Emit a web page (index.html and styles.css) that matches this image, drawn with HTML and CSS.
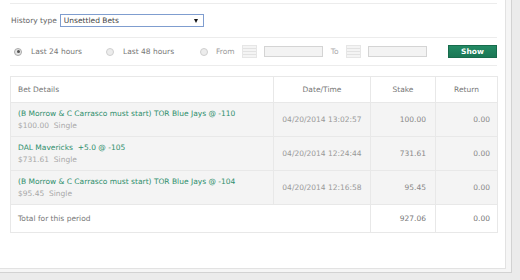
FILE: index.html
```html
<!DOCTYPE html>
<html lang="en">

<head>
    <meta charset="UTF-8">
    <title>Bet History</title>
    <link rel="stylesheet" href="styles.css">
</head>

<body>
    <div class="frame">
        <div class="panel">
            <div class="filters">
                <!-- History type -->
                <div class="filter-row history">
                    <label for="history-type">History type</label>
                    <span class="select-wrap">
                        <select id="history-type">
                            <option>Unsettled Bets</option>
                            <option>Settled Bets</option>
                        </select>
                    </span>
                </div>

                <!-- Period -->
                <div class="filter-row period">
                    <span class="radio checked"></span><span class="radio-label first">Last 24 hours</span>
                    <span class="radio"></span><span class="radio-label">Last 48 hours</span>
                    <span class="radio"></span><span class="radio-label short">From</span>
                    <span class="cal"></span><span class="date-input"></span>
                    <span class="radio-label to">To</span>
                    <span class="cal"></span><span class="date-input"></span>
                    <button class="show-btn">Show</button>
                </div>
            </div>

            <table class="bets">
                <thead>
                    <tr>
                        <th class="col-details">Bet Details</th>
                        <th class="col-date">Date/Time</th>
                        <th class="col-stake">Stake</th>
                        <th class="col-return">Return</th>
                    </tr>
                </thead>
                <tbody>
                    <tr class="bet">
                        <td>
                            <a href="#" class="selection">(B Morrow &amp; C Carrasco must start) TOR Blue Jays @ -110</a>
                            <div class="sub">$100.00&nbsp; Single</div>
                        </td>
                        <td class="date">04/20/2014 13:02:57</td>
                        <td class="num">100.00</td>
                        <td class="num">0.00</td>
                    </tr>
                    <tr class="bet">
                        <td>
                            <a href="#" class="selection">DAL Mavericks&nbsp; +5.0 @ -105</a>
                            <div class="sub">$731.61&nbsp; Single</div>
                        </td>
                        <td class="date">04/20/2014 12:24:44</td>
                        <td class="num">731.61</td>
                        <td class="num">0.00</td>
                    </tr>
                    <tr class="bet">
                        <td>
                            <a href="#" class="selection">(B Morrow &amp; C Carrasco must start) TOR Blue Jays @ -104</a>
                            <div class="sub">$95.45&nbsp; Single</div>
                        </td>
                        <td class="date">04/20/2014 12:16:58</td>
                        <td class="num">95.45</td>
                        <td class="num">0.00</td>
                    </tr>
                    <tr class="total">
                        <td colspan="2">Total for this period</td>
                        <td class="num">927.06</td>
                        <td class="num">0.00</td>
                    </tr>
                </tbody>
            </table>
        </div>
    </div>
</body>

</html>
```

FILE: styles.css
```css
body {
    margin: 0;
    background-color: #ebebeb;
    font-family: "DejaVu Sans", Verdana, sans-serif;
    font-size: 7.5px;
    color: #666;
}

.frame {
    width: 511px;
    height: 272px;
    background-color: #f5f5f5;
    border-right: 1px solid #d2d2d2;
    border-bottom: 1px solid #d2d2d2;
}

.panel {
    width: 495px;
    height: 265px;
    padding: 3px 0 0 10px;
    background-color: white;
    border-right: 1px solid #e2e2e2;
    border-bottom: 1px solid #e2e2e2;
}

.filters {
    width: 487px;
    border-top: 1px solid #ececec;
}

.filter-row {
    display: flex;
    align-items: center;
    border-bottom: 1px solid #ececec;
}

.history {
    height: 33px;
    padding-left: 1px;
}

.history label {
    margin-right: 3px;
    color: #666;
}

.select-wrap {
    position: relative;
    display: inline-block;
}

.select-wrap::after {
    content: "";
    position: absolute;
    right: 6px;
    top: 5px;
    border-left: 2.5px solid transparent;
    border-right: 2.5px solid transparent;
    border-top: 4px solid #111;
    pointer-events: none;
}

select {
    appearance: none;
    width: 144px;
    height: 13px;
    padding: 0 0 0 3px;
    border: 1px solid #7f9dcf;
    border-radius: 0;
    background-color: white;
    font-family: inherit;
    font-size: 7.5px;
    color: #444;
}

.period {
    height: 27px;
    padding-left: 4px;
}

.radio {
    width: 6px;
    height: 6px;
    border: 1px solid #cfcfcf;
    border-radius: 50%;
    background-color: #ececec;
    box-sizing: content-box;
    position: relative;
}

.radio.checked {
    background-color: #e4e4e4;
    border-color: #aaa;
}

.radio.checked::after {
    content: "";
    position: absolute;
    left: 1.5px;
    top: 1.5px;
    width: 3px;
    height: 3px;
    border-radius: 50%;
    background-color: #555;
}

.radio-label {
    margin: 0 26px 0 9px;
    color: #777;
}

.radio-label.first {
    margin-right: 24px;
}

.radio-label.short {
    margin: 0 7px 0 8px;
    color: #999;
}

.radio-label.to {
    margin: 0 7px 0 8px;
    color: #aaa;
}

.cal {
    width: 15px;
    height: 13px;
    box-sizing: border-box;
    border: 1px solid #e6e6e6;
    background: repeating-linear-gradient(#f4f4f4 0, #f4f4f4 2px, #e2e2e2 2px, #e2e2e2 3px);
}

.date-input {
    width: 59px;
    height: 11px;
    margin-left: 7px;
    box-sizing: border-box;
    border: 1px solid #d4d4d4;
    background-color: #f3f3f3;
}

.show-btn {
    margin-left: auto;
    width: 49px;
    height: 13px;
    padding: 0;
    border: 1px solid #176b4c;
    background: linear-gradient(#238a64, #1b7755);
    color: white;
    font-family: inherit;
    font-size: 7.5px;
    font-weight: bold;
    cursor: pointer;
}

.bets {
    width: 487px;
    margin-top: 10px;
    border-collapse: collapse;
    table-layout: fixed;
}

.bets th,
.bets td {
    box-sizing: border-box;
    border: 1px solid #e8e8e8;
    padding: 0 7px;
    vertical-align: middle;
}

.bets th {
    height: 26px;
    font-weight: normal;
    color: #777;
}

.col-details {
    width: 263px;
    text-align: left;
}

.col-date {
    width: 97px;
}

.col-stake {
    width: 65px;
}

.col-return {
    width: 62px;
}

.bet td {
    height: 34px;
    background-color: #f4f4f4;
}

.selection {
    display: block;
    line-height: 12px;
    color: #2f8f6d;
    text-decoration: none;
}

.sub {
    line-height: 12px;
    color: #a8a8a8;
}

.date {
    text-align: center;
    color: #999;
}

.num {
    text-align: right;
    color: #888;
}

.bets td.num {
    padding-right: 9px;
}

.bets td.num:last-child {
    padding-right: 7px;
}

.total td {
    height: 28px;
    background-color: white;
    color: #777;
}
```
